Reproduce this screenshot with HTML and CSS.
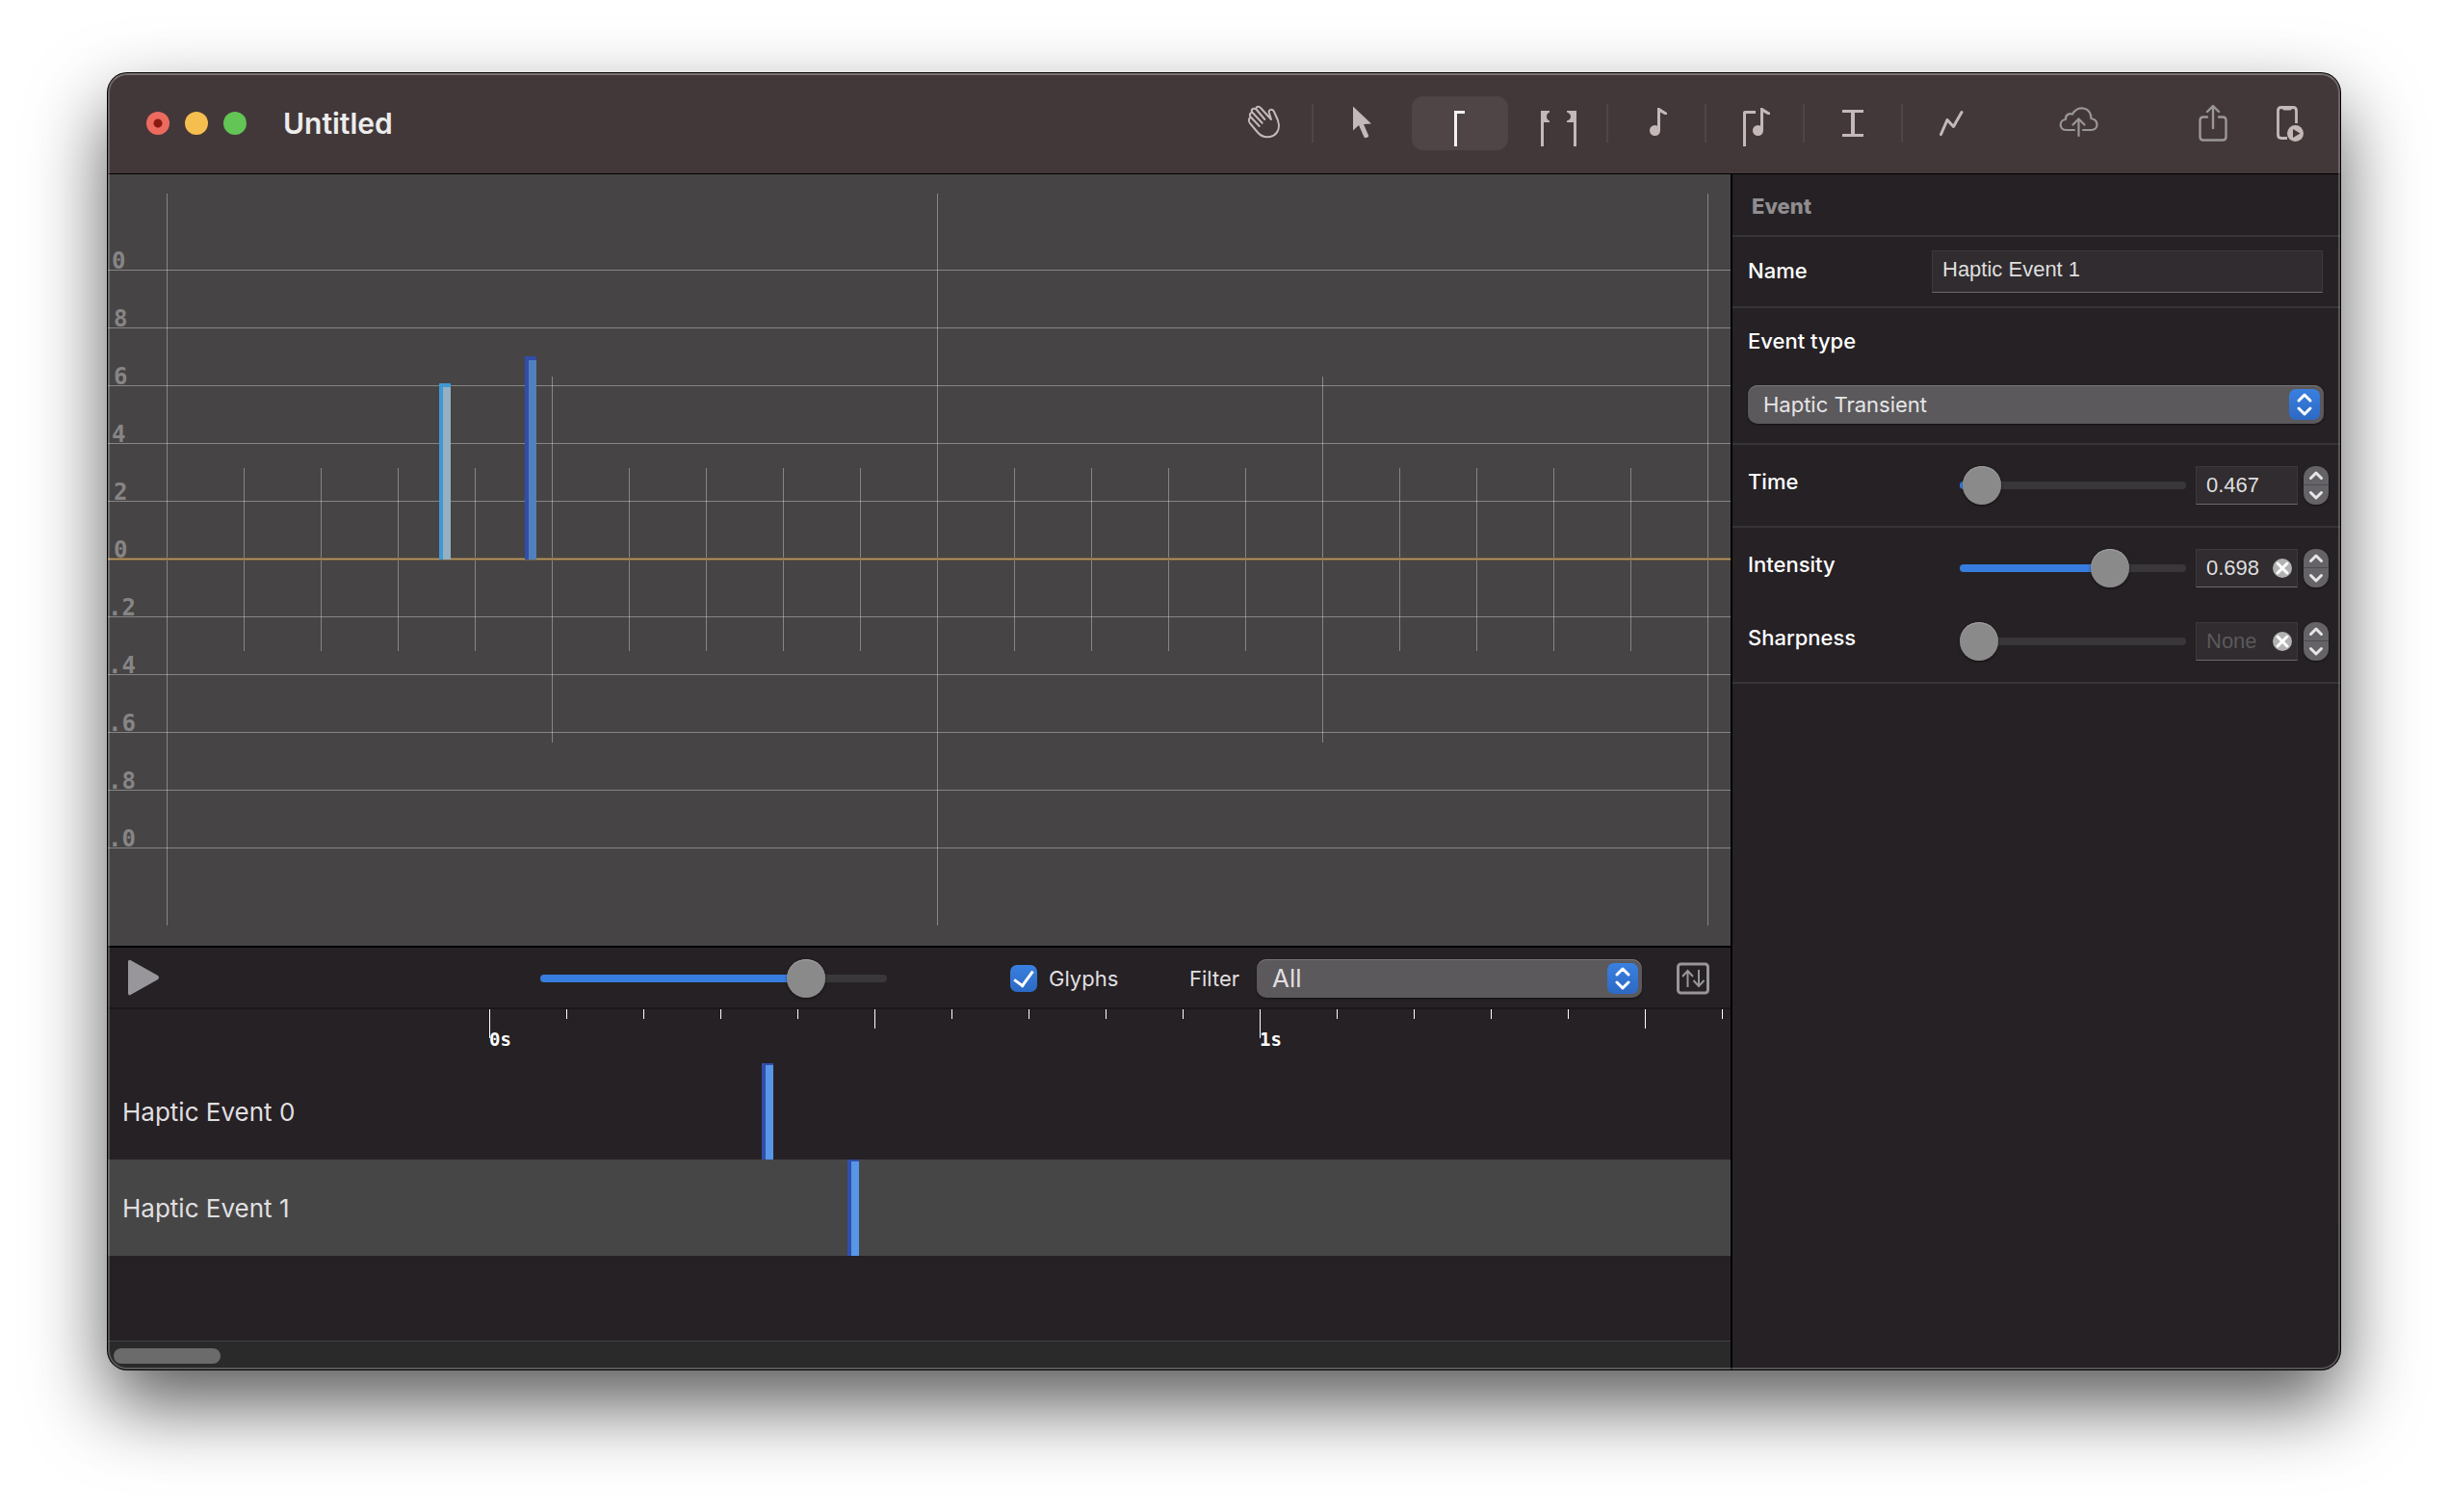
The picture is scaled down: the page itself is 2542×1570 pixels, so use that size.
FILE: index.html
```html
<!DOCTYPE html>
<html lang="en">
<head>
<meta charset="utf-8">
<title>Untitled</title>
<link rel="stylesheet" href="styles.css">
</head>
<body>
<main class="window">
  <header class="titlebar">
    <div class="lights">
      <button class="light close" aria-label="Close"></button>
      <button class="light minimize" aria-label="Minimize"></button>
      <button class="light zoom" aria-label="Zoom"></button>
    </div>
    <h1 class="title">Untitled</h1>
    <div class="tools">
      <button class="tool divided" aria-label="Pan">
        <svg width="100" height="56" fill="none" stroke="currentColor" stroke-width="2" stroke-linecap="round" stroke-linejoin="round"><path d="M58 24L47 12C45 9.500 41.500 11 42.500 13.500C39 11.500 36.500 14 38.500 16.800C35.500 17 35 20 37 21.800C34.500 22.500 34 25.500 36 28L44 37.500C48.500 42.500 54 43.500 60 41C66 37.500 67 31 65 25L61 16C59.500 12.500 55 13.500 55.800 17L58 24M42.500 13.500L51.300 24M38.500 16.800L48.700 27.800M37 21.800L45.700 31"/></svg>
      </button>
      <button class="tool" aria-label="Select">
        <svg width="100" height="56" fill="currentColor"><path d="M41 10.500V35.500L47 30L52.500 42.500Q54 44 57 42V40.500L52 29L60 28.500Z"/></svg>
      </button>
      <button class="tool active" aria-label="Haptic transient">
        <svg width="100" height="56" fill="currentColor"><path d="M44 15H55V18H47V52H44Z"/></svg>
      </button>
      <button class="tool divided" aria-label="Haptic continuous">
        <svg width="100" height="56" fill="currentColor"><path d="M32 15H41V16.500Q38 18 38 21Q38 24 41 25.500V27H35V52H32ZM69 15H59V16.500Q63 18 63 21Q63 24 59 25.500V27H66V52H69Z"/></svg>
      </button>
      <button class="tool divided" aria-label="Audio">
        <svg width="100" height="56" fill="currentColor"><circle cx="48.500" cy="35.500" r="5.500"/><path d="M51 12H53L61 17V19H58.500L54 16.500V36H51Z"/></svg>
      </button>
      <button class="tool divided" aria-label="Haptic and audio">
        <svg width="100" height="56" fill="currentColor"><circle cx="53.500" cy="35.500" r="5.500"/><path d="M56 12H58L66 17V19H63.500L59 16.500V36H56ZM38 17Q38 15 40 15H51V18H41V52H38Z"/></svg>
      </button>
      <button class="tool divided" aria-label="Parameter">
        <svg width="100" height="56" fill="currentColor"><path d="M39 14H61V17H52V39H61V42H39V39H48V17H39Z"/></svg>
      </button>
      <button class="tool" aria-label="Curve">
        <svg width="100" height="56" fill="none" stroke="currentColor" stroke-width="3" stroke-linecap="round" stroke-linejoin="round"><path d="M39.500 39.500L46 24.500L52.500 31.500L61 16.500"/></svg>
      </button>
    </div>
    <button class="action dim upload" aria-label="Upload">
      <svg width="60" height="56" fill="none" stroke="currentColor" stroke-width="2.200" stroke-linecap="round" stroke-linejoin="round"><path d="M26 35H18C9.500 35 10 24.500 17 24C16.500 19.500 20.500 17 24 18.500C29 9 43 10.500 43.500 23C51.500 24.500 51.500 35 43.500 35H35M30.500 41V24M24.500 29.500L30.500 23.500L36.500 29.500"/></svg>
    </button>
    <button class="action dim share" aria-label="Share">
      <svg width="60" height="56" fill="none" stroke="currentColor" stroke-width="2.400" stroke-linecap="round" stroke-linejoin="round"><path d="M24 21.500H20Q16.500 21.500 16.500 25V42Q16.500 45.500 20 45.500H40Q43.500 45.500 43.500 42V25Q43.500 21.500 40 21.500H36M30 33V10.500M24 16L30 10L36 16"/></svg>
    </button>
    <button class="action" aria-label="Send to device">
      <svg width="60" height="56" fill="none"><path d="M27 43.500H21Q17.500 43.500 17.500 40V15Q17.500 11.500 21 11.500H33Q36.500 11.500 36.500 15V28" stroke="currentColor" stroke-width="2.800"/><path d="M21 11H33Q32 14.500 30 14.500H24Q22 14.500 21 11Z" fill="currentColor"/><circle cx="35.500" cy="38.500" r="8.500" fill="currentColor"/><path d="M33 34V43L40.500 38.500Z" fill="#433839"/></svg>
    </button>
  </header>

  <div class="workspace">
    <section class="editor">
      <svg class="chart" shape-rendering="crispEdges" aria-label="Haptic pattern graph">
        <g class="labels">
          <text x="4" y="98">0</text><text x="6" y="158">8</text><text x="6" y="218">6</text><text x="4" y="278">4</text><text x="6" y="338">2</text><text x="6" y="398">0</text>
          <text x="0" y="458">.2</text><text x="0" y="518">.4</text><text x="0" y="578">.6</text><text x="0" y="638">.8</text><text x="0" y="698">.0</text>
        </g>
        <g class="grid">
          <rect y="99" width="100%" height="1"/><rect y="159" width="100%" height="1"/><rect y="219" width="100%" height="1"/><rect y="279" width="100%" height="1"/><rect y="339" width="100%" height="1"/>
          <rect y="459" width="100%" height="1"/><rect y="519" width="100%" height="1"/><rect y="579" width="100%" height="1"/><rect y="639" width="100%" height="1"/><rect y="699" width="100%" height="1"/>
          <path d="M61 20h1v760h-1zM861 20h1v760h-1zM1661 20h1v760h-1zM461 210h1v380h-1zM1261 210h1v380h-1z"/>
          <path d="M141 305h1v190h-1zM221 305h1v190h-1zM301 305h1v190h-1zM381 305h1v190h-1zM541 305h1v190h-1zM621 305h1v190h-1zM701 305h1v190h-1zM781 305h1v190h-1zM941 305h1v190h-1zM1021 305h1v190h-1zM1101 305h1v190h-1zM1181 305h1v190h-1zM1341 305h1v190h-1zM1421 305h1v190h-1zM1501 305h1v190h-1zM1581 305h1v190h-1z"/>
        </g>
        <rect class="zero-edge" y="398" width="100%" height="3"/>
        <rect class="zero" y="399" width="100%" height="1"/>
        <path d="M344 217h12v183h-12z" fill="#4099d2"/><path d="M348 221h8v179h-8z" fill="#95b0c3"/>
        <path d="M433 189h12v211h-12z" fill="#324eab"/><path d="M437 193h8v207h-8z" fill="#5280bd"/>
      </svg>

      <div class="transport">
        <button class="icon-button play" aria-label="Play">
          <svg width="34" height="38" fill="#98969a"><path d="M1 3Q1 0 3.500 1L32 17Q34 19 32 21L3.500 37Q1 38.500 1 35Z"/></svg>
        </button>
        <input class="slider zoom-slider" type="range" min="0" max="100" value="80" aria-label="Zoom" style="--value: 0.8">
        <label class="check"><input type="checkbox" checked>Glyphs</label>
        <label class="filter-label" for="filter">Filter</label>
        <div class="popup filter">
          <select id="filter"><option>All</option></select>
          <svg class="chevrons" width="32" height="32"><use href="#updown"/></svg>
        </div>
        <button class="icon-button" aria-label="Sort">
          <svg width="34" height="34" fill="none" stroke="#98969a" stroke-width="2"><rect x="1.500" y="2" width="31" height="30" rx="3" stroke-width="3"/><path d="M11.500 26V9M6 15L11.500 9L17 15M23 8V25M17.500 19L23 25L28.500 19"/></svg>
        </button>
      </div>

      <svg class="ruler" shape-rendering="crispEdges" aria-label="Time ruler">
        <path fill="#fff" d="M396 0h1v30h-1zM476 0h1v10h-1zM556 0h1v10h-1zM636 0h1v10h-1zM716 0h1v10h-1zM796 0h1v20h-1zM876 0h1v10h-1zM956 0h1v10h-1zM1036 0h1v10h-1zM1116 0h1v10h-1zM1196 0h1v30h-1zM1276 0h1v10h-1zM1356 0h1v10h-1zM1436 0h1v10h-1zM1516 0h1v10h-1zM1596 0h1v20h-1zM1676 0h1v10h-1z"/>
        <text x="396" y="38">0s</text><text x="1196" y="38">1s</text>
      </svg>

      <div class="tracks">
        <div class="track">Haptic Event 0<span class="event" style="left: 679px"></span></div>
        <div class="track selected">Haptic Event 1<span class="event" style="left: 768px"></span></div>
      </div>
      <div class="scrollbar"><div class="scroll-thumb"></div></div>
    </section>

    <aside class="inspector">
      <h2 class="heading">Event</h2>
      <div class="section name-row">
        <label for="name">Name</label>
        <input class="text" id="name" type="text" value="Haptic Event 1">
      </div>
      <div class="section type-row">
        <label for="type">Event type</label>
        <div class="popup">
          <select id="type"><option>Haptic Transient</option></select>
          <svg class="chevrons" width="32" height="32"><use href="#updown"/></svg>
        </div>
      </div>
      <div class="section">
        <div class="param">
          <label for="time">Time</label>
          <input class="slider" type="range" min="0" max="30" step="0.001" value="0.467" aria-label="Time" style="--value: 0.015">
          <div class="number"><input class="text" id="time" type="text" value="0.467"></div>
          <button class="stepper" aria-label="Step time"><svg width="26" height="40"><use href="#step"/></svg></button>
        </div>
      </div>
      <div class="section">
        <div class="param">
          <label for="intensity">Intensity</label>
          <input class="slider" type="range" min="0" max="1" step="0.001" value="0.698" aria-label="Intensity" style="--value: 0.698">
          <div class="number"><input class="text" id="intensity" type="text" value="0.698"><button class="clear" aria-label="Clear intensity"><svg width="20" height="20"><use href="#cross"/></svg></button></div>
          <button class="stepper" aria-label="Step intensity"><svg width="26" height="40"><use href="#step"/></svg></button>
        </div>
        <div class="param">
          <label for="sharpness">Sharpness</label>
          <input class="slider" type="range" min="0" max="1" step="0.001" value="0" aria-label="Sharpness" style="--value: 0">
          <div class="number"><input class="text" id="sharpness" type="text" placeholder="None"><button class="clear" aria-label="Clear sharpness"><svg width="20" height="20"><use href="#cross"/></svg></button></div>
          <button class="stepper" aria-label="Step sharpness"><svg width="26" height="40"><use href="#step"/></svg></button>
        </div>
      </div>
    </aside>
  </div>
</main>

<svg class="defs" width="0" height="0" aria-hidden="true">
  <symbol id="updown" viewBox="0 0 32 32"><path d="M10 12L16 6L22 12M10 20L16 26L22 20" fill="none" stroke="#fff" stroke-width="3" stroke-linecap="round" stroke-linejoin="round"/></symbol>
  <symbol id="step" viewBox="0 0 26 40"><path d="M0 19.500H26" stroke="#4d4b4f"/><path d="M7.500 12.500L13 7L18.500 12.500M7.500 27.500L13 33L18.500 27.500" fill="none" stroke="#e6e6e6" stroke-width="3" stroke-linecap="round" stroke-linejoin="round"/></symbol>
  <symbol id="cross" viewBox="0 0 20 20"><circle cx="10" cy="10" r="10" fill="#b3b2b3"/><path d="M5 5L15 15M15 5L5 15" stroke="#fff" stroke-width="3" stroke-linecap="round"/></symbol>
</svg>
</body>
</html>
```
FILE: styles.css
```css
* { box-sizing: border-box; }

body {
  margin: 0;
  min-height: 100vh;
  padding: 76px 112px 148px;
  display: flex;
  background: #fff;
  color: #e0dfe0;
  font: 22px/28px Inter, sans-serif;
}

button {
  padding: 0;
  border: 0;
  background: none;
  color: inherit;
  display: flex;
  align-items: center;
  justify-content: center;
}

input, select { font: inherit; color: inherit; }
svg { display: block; }
.defs { position: absolute; }

.window {
  position: relative;
  flex: 1;
  min-width: 0;
  display: flex;
  flex-direction: column;
  overflow: hidden;
  border-radius: 20px;
  background: #252124;
  box-shadow: 0 0 0 1px #000, 0 36px 80px rgba(0, 0, 0, 0.65);
}

.window::after {
  content: "";
  position: absolute;
  inset: 0;
  border: 2px solid rgba(255, 255, 255, 0.22);
  border-top-color: rgba(255, 255, 255, 0.3);
  border-radius: 20px;
  pointer-events: none;
}

/* Title bar */
.titlebar {
  height: 105px;
  padding: 0 22px 0 40px;
  display: flex;
  align-items: center;
  background: #433839;
  border-bottom: 1px solid #000;
}

.lights { display: flex; gap: 16px; }
.light { width: 24px; height: 24px; border-radius: 50%; }
.close { background: radial-gradient(circle, #8b1a10 4px, #ed6a5f 5px); }
.minimize { background: #f5bf50; }
.zoom { background: #62c555; }

.title {
  margin: 0 auto 0 38px;
  font-size: 30px;
  line-height: 36px;
  font-weight: 600;
  color: #ececec;
}

.tools { display: flex; gap: 2px; margin-right: 52px; }
.tool { position: relative; width: 100px; height: 56px; color: #c4b8b9; }
.tool.active { border-radius: 12px; background: #4f4546; color: #f3f1f1; }
.tool.divided::after {
  content: "";
  position: absolute;
  top: 8px;
  right: -2px;
  width: 2px;
  height: 40px;
  background: #4f4546;
}
.action { width: 60px; height: 56px; color: #c4b8b9; }
.dim { color: #9a9796; }
.upload { margin-right: 80px; }
.share { margin-right: 20px; }

/* Editor column */
.workspace {
  flex: 1;
  display: grid;
  grid-template-columns: minmax(0, 1fr) 633px;
}

.editor { display: flex; flex-direction: column; min-width: 0; }

.chart {
  flex: 1;
  width: 100%;
  min-height: 800px;
  background: #464445;
}
.labels { fill: #868586; font: bold 24px "DejaVu Sans Mono", monospace; }
.grid { fill: rgba(255, 255, 255, 0.35); }
.zero-edge { fill: #7a623f; }
.zero { fill: #b89b68; }

.transport {
  height: 66px;
  padding: 2px 22px 0 20px;
  display: flex;
  align-items: center;
  border-top: 2px solid #000;
  border-bottom: 2px solid #1a171a;
}
.play { margin-right: auto; padding-bottom: 2px; }
.check { width: 186px; display: flex; align-items: center; gap: 12px; }
.check input {
  appearance: none;
  width: 28px;
  height: 28px;
  margin: 0;
  border-radius: 7px;
  background: linear-gradient(#3a80e0, #2c69c4);
  display: grid;
  place-items: center;
}
.check input:checked::before {
  content: "";
  width: 9px;
  height: 17px;
  margin-bottom: 4px;
  border: solid #fff;
  border-width: 0 3px 3px 0;
  transform: rotate(36deg);
}
.filter-label { width: 70px; }
.filter { width: 400px; margin-right: 36px; font-size: 26px; }

.popup { display: grid; align-items: center; }
.popup > * { grid-area: 1 / 1; }
.popup select {
  appearance: none;
  width: 100%;
  height: 40px;
  padding: 0 48px 0 16px;
  border: 0;
  border-radius: 10px;
  background: #5b595c;
  box-shadow: inset 0 1px 0 #79777a, 0 1px 2px rgba(0, 0, 0, 0.5);
}
.chevrons {
  justify-self: end;
  margin-right: 4px;
  border-radius: 7px;
  background: linear-gradient(#3a80e0, #2c69c4);
  pointer-events: none;
}

.slider {
  --fill: calc(20px + (100% - 40px) * var(--value));
  appearance: none;
  height: 40px;
  margin: 0;
  background: none;
}
.slider::-webkit-slider-runnable-track {
  height: 8px;
  border-radius: 4px;
  background: linear-gradient(90deg, #377ddf var(--fill), #39373a var(--fill));
}
.slider::-webkit-slider-thumb {
  appearance: none;
  width: 40px;
  height: 40px;
  margin-top: -16px;
  border-radius: 50%;
  background: #8b8a8b;
  box-shadow: inset 0 1px 0 #a3a2a3, 0 1px 3px rgba(0, 0, 0, 0.5);
}
.zoom-slider { width: 360px; margin-right: 128px; }

.ruler { width: 100%; height: 56px; }
.ruler text { fill: #fff; font: bold 19px "DejaVu Sans Mono", monospace; }

.tracks { min-height: 288px; }
.track {
  position: relative;
  height: 100px;
  padding-left: 15px;
  font-size: 26px;
  line-height: 102px;
}
.selected { background: #464646; }
.event {
  position: absolute;
  top: 0;
  bottom: 0;
  width: 12px;
  border-top: 2px solid #324eab;
  border-left: 4px solid #324eab;
  background: #5896e8;
}

.scrollbar {
  height: 30px;
  padding: 7px 6px;
  border-top: 1px solid #434343;
  background: #2a2a2a;
}
.scroll-thumb { width: 111px; height: 16px; border-radius: 8px; background: #6b6b6b; }

/* Inspector */
.inspector { border-left: 2px solid #000; color: #fff; }
.inspector label { font-weight: 500; }
.heading {
  height: 65px;
  margin: 0;
  padding: 0 20px;
  border-bottom: 2px solid #373437;
  font-size: 22px;
  line-height: 66px;
  font-weight: 800;
  color: #8f8d8f;
}
.section { padding: 4px 12px 4px 16px; border-bottom: 2px solid #373437; }
.name-row {
  height: 74px;
  padding: 0 18px 0 16px;
  display: flex;
  align-items: center;
  justify-content: space-between;
}
.name-row label { padding-bottom: 2px; }
.text {
  padding: 0 10px;
  border: 1px solid #3c393c;
  border-bottom: 1px solid #6b696b;
  background: #302c2f;
  color: #dfdedf;
  font-family: "Liberation Sans", sans-serif;
}
.text::placeholder { color: #5b595b; opacity: 1; }
.name-row .text { width: 406px; height: 44px; padding-bottom: 4px; }
.type-row {
  height: 142px;
  padding: 20px 17px 20px 16px;
  display: flex;
  flex-direction: column;
  justify-content: space-between;
}
.type-row .popup { color: #e6e5e6; }
.param {
  height: 76px;
  display: grid;
  grid-template-columns: 1fr 235px 106px 26px;
  align-items: center;
}
.param label { padding-bottom: 8px; }
.param .number { margin-left: 10px; margin-right: -10px; }
.param .stepper { margin-left: 16px; margin-right: -16px; }
.param { padding-right: 16px; }
.number { display: grid; align-items: center; }
.number > * { grid-area: 1 / 1; }
.number .text { width: 100%; height: 40px; }
.clear { justify-self: end; margin-right: 6px; }
.stepper { border-radius: 12px; background: #656367; box-shadow: 0 1px 2px rgba(0, 0, 0, 0.5); }
```
